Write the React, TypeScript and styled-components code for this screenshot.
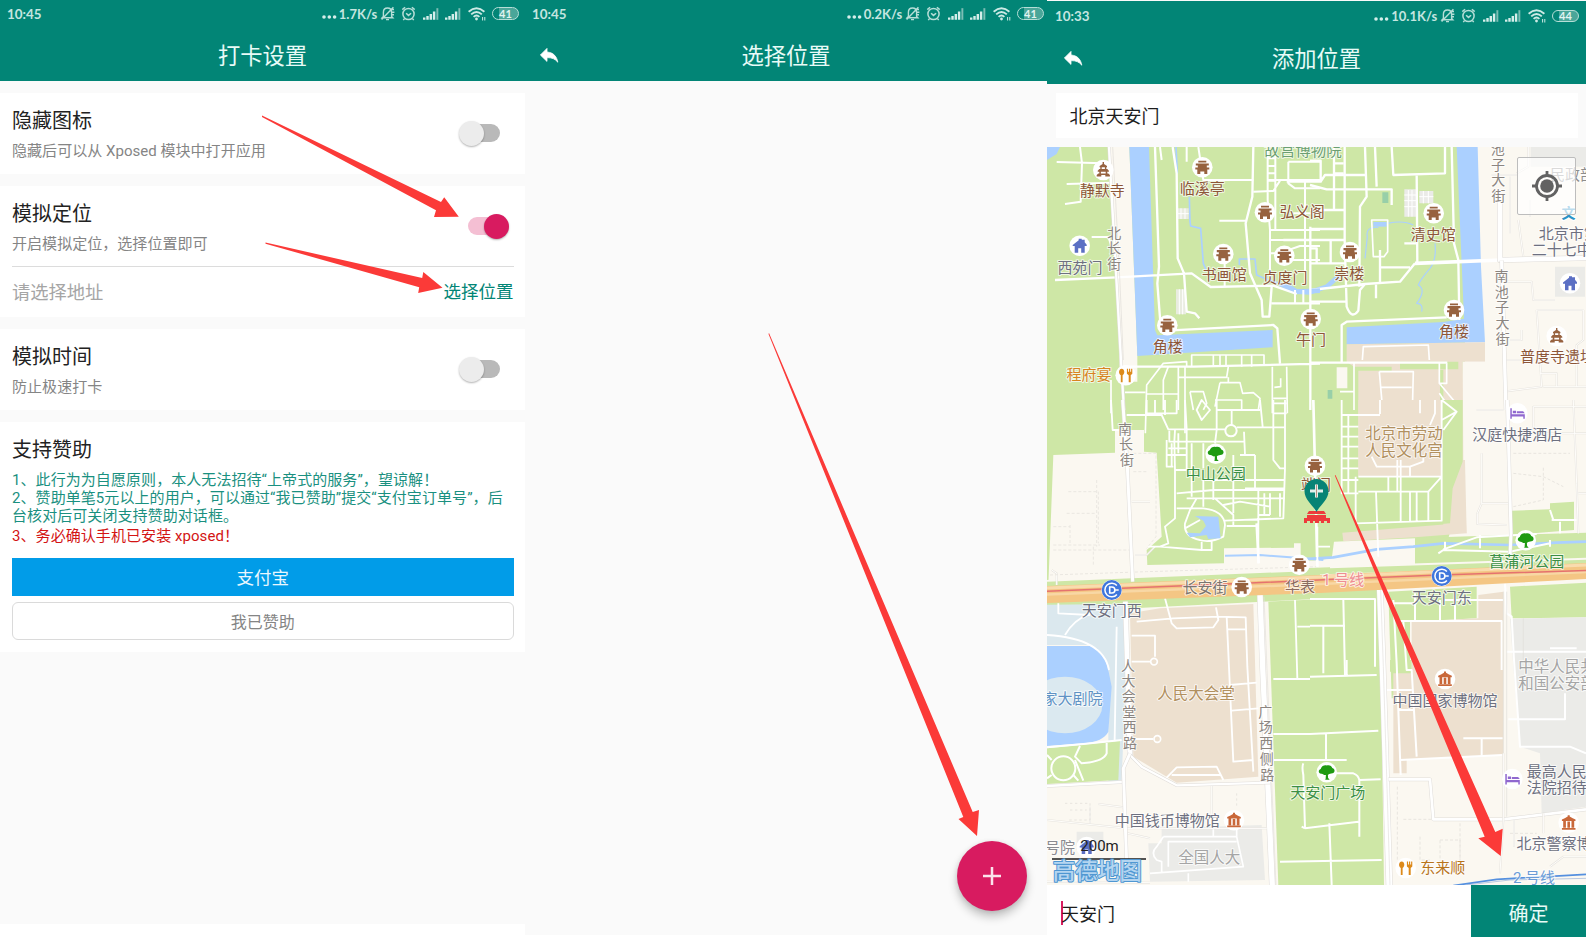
import React from "react";
import styled, { createGlobalStyle } from "styled-components";

const cjk = `Roboto, "Noto Sans CJK SC", sans-serif`;
const teal = "#028576";
const pink = "#d81b60";

const GlobalStyle = createGlobalStyle`
  *, *::before, *::after { box-sizing: border-box; }
  body { margin: 0; background: #fff; font-family: ${cjk}; }
  button, input { font: inherit; }
`;

const Page = styled.main`
  position: relative;
  display: flex;
  align-items: flex-start;
  width: 1588px;
  height: 942px;
  overflow: hidden;
  background: #fff;
`;

const Screen = styled.section<{ $w: number; $h: number }>`
  position: relative;
  display: flex;
  flex-direction: column;
  flex: none;
  width: ${(p) => p.$w}px;
  height: ${(p) => p.$h}px;
  background: #fafafa;
`;

const Header = styled.header<{ $h: number; $top?: number }>`
  display: flex;
  flex-direction: column;
  flex: none;
  height: ${(p) => p.$h}px;
  margin-top: ${(p) => p.$top ?? 0}px;
  background: ${teal};
  color: #e8fbf7;
`;

const StatusRow = styled.div<{ $h: number; $left: number; $right: number }>`
  display: flex;
  align-items: center;
  height: ${(p) => p.$h}px;
  padding: 0 ${(p) => p.$right}px 0 ${(p) => p.$left}px;
  font: 700 13px/20px Lato, sans-serif;
  color: #c5e6e0;
`;

const Clock = styled.span`
  flex: 1;
  font-size: 13.4px;
`;

const StatusIcons = styled.div`
  display: flex;
  align-items: center;
  gap: 6.4px;
  svg { display: block; flex: none; }
`;

const Speed = styled.span`
  display: flex;
  align-items: center;
  justify-content: flex-end;
  margin-right: -3.5px;
  white-space: nowrap;
`;

const Dots = styled.svg`
  margin-right: 2px;
`;

const Battery = styled.span`
  display: flex;
  align-items: center;
  justify-content: center;
  width: 27px;
  height: 12.5px;
  border: 1.3px solid #b6ded7;
  border-radius: 7px;
  background: linear-gradient(90deg, ${teal} 6px, #4aa699 6px);
  font-size: 11px;
  font-weight: 700;
  line-height: 10px;
  color: #e2f4f1;
`;

const TitleRow = styled.div`
  display: grid;
  grid-template-columns: 50px 1fr 50px;
  align-items: center;
  height: 54px;
`;

const BackButton = styled.button<{ $left: number }>`
  display: flex;
  padding: 1px 0 0 ${(p) => p.$left}px;
  border: 0;
  background: none;
  color: #fff;
`;

const Title = styled.h1`
  grid-column: 2;
  margin: 0;
  padding-top: 3px;
  text-align: center;
  font-size: 22.3px;
  font-weight: 400;
  line-height: 32px;
`;

const CardList = styled.div`
  display: flex;
  flex-direction: column;
  gap: 12.5px;
  padding-top: 12px;
`;

const Card = styled.article<{ $h: number }>`
  height: ${(p) => p.$h}px;
  padding: 13px 11.5px 0 12px;
  background: #fff;
`;

const SettingRow = styled.div`
  display: flex;
  justify-content: space-between;
`;

const CardTitle = styled.h2`
  margin: 0;
  font-size: 20px;
  font-weight: 400;
  line-height: 30px;
  color: #222;
`;

const CardHint = styled.p`
  margin: 3px 0 0;
  font-size: 15.05px;
  line-height: 24px;
  color: #858585;
`;

const SwitchTrack = styled.span<{ $on?: boolean }>`
  display: flex;
  align-items: center;
  justify-content: ${(p) => (p.$on ? "flex-end" : "flex-start")};
  width: 32px;
  height: 18px;
  margin: 18px ${(p) => (p.$on ? 14 : 14)}px 0 0;
  border-radius: 9px;
  background: ${(p) => (p.$on ? "#f4bfd3" : "#b9b9b9")};
  &::after {
    content: "";
    flex: none;
    width: 25px;
    height: 25px;
    margin: 0 -9px;
    border-radius: 50%;
    background: ${(p) => (p.$on ? pink : "#ececec")};
    box-shadow: 0 1px 2px rgba(0, 0, 0, 0.3);
  }
`;

const AddressRow = styled.div`
  display: flex;
  align-items: center;
  justify-content: space-between;
  height: 50px;
  margin-top: 10px;
  padding-bottom: 2px;
  border-top: 1px solid #dcdcdc;
`;

const AddressHint = styled.span`
  font-size: 18.3px;
  color: #a5a5a5;
`;

const AddressLink = styled.span`
  font-size: 17.5px;
  color: ${teal};
`;

const Notice = styled.p<{ $warn?: boolean }>`
  margin: ${(p) => (p.$warn ? "2px" : "5.5px")} 0 0;
  font-size: 15px;
  line-height: 18.2px;
  letter-spacing: 0.07px;
  white-space: nowrap;
  color: ${(p) => (p.$warn ? "#d31414" : "#1a9080")};
`;

const WideButton = styled.button<{ $primary?: boolean }>`
  display: flex;
  align-items: center;
  justify-content: center;
  width: 100%;
  height: 38px;
  margin-top: ${(p) => (p.$primary ? 12.5 : 6)}px;
  padding: 0;
  border: ${(p) => (p.$primary ? "0" : "1px solid #dadada")};
  border-radius: ${(p) => (p.$primary ? 0 : 6)}px;
  background: ${(p) => (p.$primary ? "#019ce8" : "#fff")};
  color: ${(p) => (p.$primary ? "#eaf7fe" : "#858585")};
  font-size: ${(p) => (p.$primary ? 17.5 : 16)}px;
`;

const Fab = styled.button`
  position: absolute;
  right: 20.5px;
  bottom: 24px;
  display: flex;
  align-items: center;
  justify-content: center;
  width: 70px;
  height: 70px;
  padding: 0;
  border: 0;
  border-radius: 50%;
  background: ${pink};
  box-shadow: 0 6px 10px rgba(0, 0, 0, 0.22), 0 1px 5px rgba(0, 0, 0, 0.1);
`;

const SearchBox = styled.div`
  display: flex;
  align-items: center;
  flex: none;
  height: 45px;
  margin: 9px 8px 9px 9px;
  padding: 0 0 2px 13.5px;
  background: #fff;
  font-size: 18px;
  color: #1d1d1d;
`;

const MapArea = styled.div`
  position: relative;
  flex: none;
  height: 738px;
`;

const MapSvg = styled.svg`
  display: block;
  width: 539px;
  height: 738px;
`;

const MapText = styled.text<{ $size: number; $weight: number; $halo: string; $stroke?: number }>`
  font-family: ${cjk};
  font-size: ${(p) => p.$size}px;
  font-weight: ${(p) => p.$weight};
  paint-order: stroke;
  stroke: ${(p) => p.$halo};
  stroke-width: ${(p) => p.$stroke ?? 2}px;
  stroke-linejoin: round;
`;

const LocateButton = styled.button`
  position: absolute;
  top: 10px;
  right: 10px;
  display: flex;
  align-items: center;
  justify-content: center;
  width: 59px;
  height: 58px;
  padding: 0;
  border: 1px solid #bdbdbd;
  border-radius: 2px;
  background: rgba(255, 255, 255, 0.68);
`;

const Footer = styled.footer`
  display: flex;
  align-items: stretch;
  height: 52px;
  background: #fff;
`;

const FooterField = styled.div`
  display: flex;
  align-items: center;
  flex: 1;
  padding: 3px 0 0 14px;
  font-size: 18px;
  color: #1d1d1d;
  &::before {
    content: "";
    width: 2px;
    height: 24px;
    margin-right: -2px;
    background: ${pink};
  }
`;

const ConfirmButton = styled.button`
  width: 115px;
  padding: 2px 0 0;
  border: 0;
  background: ${teal};
  color: #e8fbf7;
  font-size: 20px;
`;

const ArrowLayer = styled.svg`
  position: absolute;
  inset: 0;
  pointer-events: none;
`;

const BellOff = () => (
  <svg width="15" height="15" viewBox="0 0 15 15" fill="none" stroke="#b6ded7" strokeWidth="1.4">
    <path d="M3.4 10.6V6.2C3.4 3.6 5.2 2 7.5 2s4.1 1.6 4.1 4.2v4.4l1.2 1.2H2.2zM6 13.6h3M1.6 13.4L13.4 1.2M11 3.5h3M12 6.2h2.4M12 8.8h2" />
  </svg>
);

const Alarm = () => (
  <svg width="15" height="15" viewBox="0 0 14 15" fill="none" stroke="#b6ded7" strokeWidth="1.5">
    <circle cx="7" cy="8" r="5.6" />
    <path d="M.8 3.6L3.6 1.2M13.2 3.6L10.4 1.2M4.6 7.2L7 9.4l2.6-2.2M3 12.6l-1.2 1.5M11 12.6l1.2 1.5" />
  </svg>
);

const Signal = () => (
  <svg width="16" height="12" viewBox="0 0 16.5 12">
    <path d="M0 9.5h2.5V12H0zM3.4 8h2.5v4H3.400zM6.800 6h2.500v6H6.800zM10.200 3.400h2.500V12h-2.500z" fill="#d5eeea" />
    <path d="M13.800 0h2v12h-2z" fill="#7cbdb4" />
  </svg>
);

const Wifi = () => (
  <svg width="18" height="14" viewBox="0 0 18 14" fill="none" stroke="#cdeae5" strokeWidth="1.9">
    <path d="M.6 4.700Q8.500-2 16.400 4.700M3.200 7.400Q8.500 2.600 13.800 7.400M5.600 9.900Q8.500 7.300 11.400 9.900" />
    <circle cx="8.5" cy="12" r="1.4" fill="#cdeae5" stroke="none" />
    <path d="M14.600 10v3.500M16.800 10v3.500" strokeWidth="1" />
  </svg>
);

interface StatusProps {
  time: string;
  speed: string;
  level: string;
  h: number;
  left: number;
  right: number;
}

const StatusBar = ({ time, speed, level, h, left, right }: StatusProps) => (
  <StatusRow $h={h} $left={left} $right={right}>
    <Clock>{time}</Clock>
    <StatusIcons>
      <Speed>
        <Dots width="15" height="14" viewBox="0 0 15 14" fill="#d5eeea">
          <circle cx="2" cy="10" r="1.8" />
          <circle cx="7.3" cy="10" r="1.8" />
          <circle cx="12.6" cy="10" r="1.8" />
        </Dots>
        {speed}
      </Speed>
      <BellOff />
      <Alarm />
      <Signal />
      <Signal />
      <Wifi />
      <Battery>{level}</Battery>
    </StatusIcons>
  </StatusRow>
);

const Back = ({ left }: { left: number }) => (
  <BackButton $left={left} aria-label="back">
    <svg width="24" height="24" viewBox="0 0 24 24" fill="currentColor" stroke="currentColor" strokeWidth="0.8" strokeLinejoin="round">
      <path d="M10 9V5.4L3.4 12l6.6 6.4v-3.800c5 0 8.200 1.400 10.800 4.600C19.800 14 17 9.600 10 9z" />
    </svg>
  </BackButton>
);

const brown = "#8d5638";
const slate = "#6d7080";
const road = "#8b8580";
const leaf = "#3b8f45";
const tan = "#b1905f";
const faint = "#a5a5a5";

type Kind = "gate" | "temple" | "house" | "food" | "tree" | "metro" | "bed" | "museum";

const pins: [Kind, number, number][] = [
  ["temple", 1103.3, 170], ["gate", 1202.3, 167.3], ["gate", 1265, 212.3], ["house", 1079.7, 245.7],
  ["gate", 1223.3, 254], ["gate", 1284.3, 255.7], ["gate", 1167.3, 325.3], ["food", 1125.7, 375.3],
  ["gate", 1310.7, 319], ["gate", 1433.7, 213.3], ["gate", 1350, 252], ["gate", 1454, 310],
  ["house", 1570, 283.3], ["temple", 1556.7, 336], ["tree", 1215.7, 453.7], ["gate", 1315, 465.7],
  ["metro", 1111.7, 590], ["gate", 1241.7, 587], ["gate", 1299.3, 564.7], ["bed", 1517.3, 413.3],
  ["metro", 1441.7, 576], ["tree", 1525.7, 540.3], ["museum", 1234, 820.3], ["tree", 1326.7, 772.3],
  ["museum", 1445, 679], ["bed", 1512.3, 779], ["museum", 1568.7, 822.7], ["food", 1405.7, 868],
  ["house", 1086.7, 847],
];

type Anchor = "start" | "middle" | "end";
const labels: [string, number, number, string, number?, Anchor?][] = [
  ["故宫博物院", 1303, 150.5, "#6b9f72", 15.5],
  ["静默寺", 1102.3, 190.7, brown], ["临溪亭", 1202.3, 189, brown], ["弘义阁", 1302.3, 212.3, brown],
  ["西苑门", 1080, 267.7, slate], ["书画馆", 1224.3, 275.3, brown], ["贞度门", 1285, 277.7, brown],
  ["角楼", 1167.7, 346.7, brown], ["程府宴", 1089, 375.3, "#d8841f"], ["午门", 1311, 340, brown],
  ["清史馆", 1433.3, 235, brown], ["崇楼", 1349.3, 274, brown], ["角楼", 1454, 332, brown],
  ["民政部", 1550, 175, "#8d8d8d", 15, "start"],
  ["北京市第", 1538.7, 234.3, slate, 15, "start"], ["二十七中", 1531.7, 250, slate, 15, "start"],
  ["普度寺遗址", 1520, 357.3, brown, 15, "start"],
  ["中山公园", 1215.7, 474.3, leaf], ["端门", 1316, 485.5, brown],
  ["天安门西", 1111.7, 611.3, slate], ["长安街", 1205, 587.7, "#7b756f"], ["华表", 1300, 587.3, "#8b6b60"],
  ["北京市劳动", 1404, 434, tan, 15.5], ["人民文化宫", 1404, 450.7, tan, 15.5],
  ["汉庭快捷酒店", 1517.3, 435, slate], ["天安门东", 1441.7, 598, slate],
  ["1 号线", 1343.3, 579.7, "#ef8d92", 15], ["菖蒲河公园", 1526.7, 562.3, leaf],
  ["中华人民共", 1518.2, 667, faint, 15.5, "start"], ["和国公安部", 1518.2, 684, faint, 15.5, "start"],
  ["家大剧院", 1102.5, 699, "#5f92c4", 15, "end"], ["人民大会堂", 1196, 694.3, tan, 15.5],
  ["中国钱币博物馆", 1167.3, 821.3, slate], ["号院", 1075, 848.3, "#8a8a90", 15, "end"],
  ["全国人大", 1209.3, 858.3, faint, 15.5], ["天安门广场", 1327.7, 793.5, leaf],
  ["中国国家博物馆", 1445, 700.7, slate], ["最高人民", 1526.7, 771.7, slate, 15, "start"],
  ["法院招待", 1526.7, 787.7, slate, 15, "start"], ["北京警察博", 1516.5, 844.3, slate, 15, "start"],
  ["东来顺", 1442.7, 868, "#b8741b"], ["2 号线", 1534, 877.7, "#6a9bd6", 15],
];

const streets: [string, number, number, number, number][] = [
  ["北长街", 1114.3, 233.3, 15.4, 0], ["池子大街", 1497.7, 149.5, 15.7, 0.3],
  ["南池子大街", 1501.5, 276.7, 15.6, 0.3], ["南长街", 1125, 429.3, 15.6, 1],
  ["人大会堂西路", 1128, 666, 15.4, 0.4], ["广场西侧路", 1265.3, 712, 15.8, 0.5],
];

const Glyph = ({ kind }: { kind: Kind }) => {
  switch (kind) {
    case "gate":
      return <path fill="#97623f" d="M-4-6.500h8v1.800h-8zM-6.500-3.900h13v2.200h-13zM-4.500-1.700h9v2h-9zM-7 .3H7v2H-7zM-5 2.300H5v4.500H2V4.300H-2v2.500h-3z" />;
    case "temple":
      return <path fill="#97623f" d="M-.7-8h1.400v2l3 2v1.200h-7.400V-4l3-2zM-3-2.800h1.400v2H-3zM1.600-2.800H3v2H1.600zM-5.600.8L-4-1h8l1.600 1.800v.9h-11.200zM-4 1.700h1.600v2H-4zM2.400 1.700H4v2H2.400zM-6.600 5L-5 3.400H5L6.600 5v1.500h-4.600V5h-4v1.500h-4.600z" />;
    case "house":
      return <path fill="#5b6fc4" d="M-7-.8L-1-5.500V-7h3v1h3v2.500L7-1v1.400H5V7H1.500V2.500h-3V7H-5V.4h-2z" />;
    case "food":
      return <path fill="#dd8a1b" d="M-4-6.500c3 0 3.600 5 .9 6.500V7h-1.800V0C-7.600-1.500-7-6.500-4-6.500zM1.200-6.500h1.200v3h.9v-3h1.200v3h.9v-3H6.600v5L5 0v7H3V0L1.200-1.500z" />;
    case "tree":
      return <path fill="#1f9a12" d="M-1.100 7l.3-4.400C-3 3.200-3.600 1-5.500 1.400-8.600 1-8.600-2.600-6-3.400-5-7-1.500-7.400 0-6.800c3-.8 5 .6 5.600 2.600C8.600-3.400 8.600.6 5.800 1 4 1.600 3 1 1.200 2.600l.2 3L3 7.400h-5z" />;
    case "bed":
      return <path fill="#9068cf" d="M-7-5h1.500v6h13v4.500H6V3.300H-5.500v2.200H-7zM-4.500-2.600h3.200V0h-3.200zM-.5-2h6.300L7.500 0h-8z" />;
    case "museum":
      return <path fill="#c9683a" d="M-1-7.500h2v1.200L4-4.500 6.800-3.200V-1.800H-6.800v-1.400L-4-4.500-1-6.300zM-5.500-1.800H-2.800V5h-2.700zM-1.300-1.200h2.600V5h-2.600zM2.800-1.800h2.700V5H2.800zM-6.800 5.300h13.600V7h-13.600z" />;
    case "metro":
      return (
        <g fill="none" stroke="#fff">
          <circle r="10" fill="#3f76dc" stroke="none" />
          <path d="M5.200-4.400A6.800 6.800 0 1 0 5.200 4.400" strokeWidth="1.5" />
          <path d="M-2-3v6h2.200a3 3 0 0 0 0-6zM3.200 0H7" strokeWidth="1.6" />
        </g>
      );
  }
};

const green = "#cee7a6";
const water = "#abd0ff";
const cream = "#fbf8f1";
const beige = "#ede0cf";
const gray = "#ebebe8";

interface TileProps {
  x: number;
  y: number;
  children: React.ReactNode;
}
/* Each tile is drawn on a grid three times finer than the map. */
const Tile = ({ x, y, children }: TileProps) => (
  <g transform={`translate(${x} ${y}) scale(.33333)`} fill="none" strokeLinejoin="round">
    {children}
  </g>
);

const Roads = ({ d, w = 6 }: { d: string; w?: number }) => <path d={d} stroke="#fff" strokeWidth={w} />;
const Cased = ({ d, w = 12 }: { d: string; w?: number }) => (
  <>
    <path d={d} stroke="#dfdcd8" strokeWidth={w + 3} />
    <path d={d} stroke="#fff" strokeWidth={w} />
  </>
);
const Lanes = ({ d }: { d: string }) => (
  <>
    <path d={d} stroke="#e6e3de" strokeWidth="6" />
    <path d={d} stroke="#fffefb" strokeWidth="3" />
  </>
);

const MapBase = () => (
  <>
    <path d="M1047 147h539v738h-539z" fill={cream} />
    <path d="M1047 147H1459L1465 270V360L1463 480 1448 540 1320 560 1047 580z" fill={green} />

    <Tile x={1310} y={140}>
      <path fill={water} d="M440 21H503L513 380 525 607 110 613V562L400 546 462 536 455 370z" />
      <path fill={beige} d="M110 613L525 607V665H458L470 1180 400 1160V690H390V1010H145V690L110 665z" />
      <path fill={cream} d="M526 607L528 665H458L460 960 470 1180 828 1160V600zM80 682H112V745H80z" />
      <path fill={green} d="M135 680H245V692H135zM270 665H445V688H270z" />
      <path fill={gray} d="M662 21H828V80H662zM735 380H825V470H735zM283 148H318V230H283zM328 153H370V190H328z" />
      <path fill="#98cfa8" d="M217 157h18v32h-18zM53 750h14v26h-14z" />
      <path fill={water} d="M190 246h40v14h-40z" />
      <path stroke={water} strokeWidth="3.5" d="M205 262Q165 260 172 290L165 355M233 250Q280 240 310 255M375 310Q380 360 360 385 330 420 325 435 350 450 320 490 340 490 335 515" />
      <path stroke={water} strokeWidth="14" d="M-90 432L-40 455 0 457 50 440 90 405" />
      <Roads w={7} d="M0 668H412M0 62H32V125H-70M0 135L50 148H245V195M72 21V210M72 70H100M72 100H100M104 21V300L110 500Q125 540 145 512L150 450 165 432M32 125L45 105H165M165 21L170 170 150 200 148 440M195 21L200 140M245 21L250 105 405 100V21M425 21L432 310 445 360 448 540M320 105L322 370M315 370L270 425 165 432 0 450M213 382H300M210 330V425M95 668V555L110 545 410 532M0 210H105M0 267H105M-80 300H105M0 325H20V370M62 300V370M0 370H105M198 430V475M0 485H110M283 310H322" />
      <Roads w={5} d="M185 240H233V335L222 350H190zM157 660L160 620 355 615 358 660M208 695H310L302 1010M208 695L218 810 212 822M212 742H305M132 668V810M90 755H130M388 668V730H410V670M388 730L455 810M388 760L440 835" />
      <Roads w={11} d="M315 370L575 360" />
      <Lanes d="M545 105H620M655 21V80L620 100M580 425L665 425 670 480H735M680 510H820M680 510L695 740 580 755M700 740H828M588 660H680M820 510V600L800 615V740M600 600L635 600V570M740 740V700H690M600 110V280M625 240L640 350M660 180V230" />
      <Cased w={14} d="M570 165V360L828 354" />
      <Cased w={10} d="M575 362L588 810" />
      <g stroke="#fff" strokeWidth="3">
        <path d="M283 165h35M283 182h35M283 200h35M295 150v80M306 150v80M328 170h42M340 153v37M355 153v37" />
      </g>
    </Tile>

    <Tile x={1040} y={140}>
      <path fill={cream} d="M208 21H268L292 648V725H240L236 600z" />
      <path fill={water} d="M268 21H327L345 570 352 586 698 570V622L292 648zM21 21H60L50 42 21 60z" />
      <path stroke={water} strokeWidth="5" d="M408 21L412 100M448 170L450 245 452 258 482 265 490 370 500 395M598 375V357H645L650 405 685 420 720 430" />
      <path stroke={water} strokeWidth="14" d="M735 432L770 455 840 452" />
      <path fill="#e9ece0" d="M412 205h34v32h-34zM408 448h30v75h-30z" />
      <Roads w={6} d="M120 21L126 70 122 185 75 192M50 66L190 70M80 132L215 128M155 291H205L215 320M360 21L365 60M440 21V65M475 21L490 120H640M538 242H618M640 155L700 153 720 122M683 21V180L690 270V420M706 21V270M683 55H706M683 78H706M683 100H706M683 122H706M745 65H840M745 65V130L765 145H840M685 120H840M795 125V430M690 270H840M690 300H760M740 332L780 318H840M730 360H840M690 340H730M760 220H840M765 450V490M790 450V490M554 370V440" />
      <Roads w={7} d="M345 21L357 380 352 430 362 560M380 572L700 555 712 565 720 670M398 21L410 100 413 355 432 400 440 515 465 520 478 535M640 21L637 170 617 250 630 400 665 480 668 530H688L695 440M695 490H840M811 260V810M45 420L230 412 455 400 512 441 700 437 770 462M250 680H460L840 671" />
      <Roads w={5} d="M455 680V645H672V675M520 645V680M540 645V680M558 645V680M605 645V680M635 645V680M440 680V665L370 670 320 735 316 880M385 680L370 720V810M415 680V810M435 680V880M320 762H415M415 712H560L565 680M565 712V728M540 728L525 800M540 728H600L608 760 640 758 660 775 655 810M525 780H605V810M450 755H490L500 790 490 810M450 755L460 810M697 680V820M740 680L742 820M700 775H740M703 742L722 740V715M255 757H316M213 720V820" />
      <Cased w={7} d="M207 21L217 200 230 430 243 660 252 810" />
      <path stroke="#dfdcd8" strokeWidth="2" d="M218 21L228 200 240 430 250 660" />
      <path stroke="#fff" strokeWidth="3" d="M412 221h34M423 205v32M435 205v32M418 448v75M428 448v75" />
    </Tile>

    <Tile x={1040} y={400}>
      <path fill={cream} d="M40 165L225 158V90H312V155L350 158 365 410 320 450 322 495 552 490V445L762 443V430H782V480L850 485V520L25 555z" />
      <path fill={green} d="M21 545L840 512V530L21 562z" />
      <Lanes d="M275 305H330M285 465H320L345 440M50 555V520L35 510" />
      <g stroke="#eae7e1" strokeWidth="3" strokeDasharray="9 6">
        <path d="M85 275H175V430M80 340H170M40 435H180M90 375V430M40 380H90M170 240V440M280 160H348V410L320 445M280 215H320M160 440V500M40 450H270M30 525L320 515 840 500" />
      </g>
      <Roads w={5.5} d="M213 0L218 90H240M260 45H365L385 88H440L435 0M320 0V40H410V0M345 0V40M375 0V45M388 92V125H615M380 120V200H400M380 165H440M395 130V200M385 145H440M405 90L403 125 405 210H440M405 210V355L375 380 385 430 360 440 485 450H515V422M485 425V450M575 30V75M530 0V90L525 130M530 30H660M660 0L668 80M590 82H735M440 88H555M612 95L615 165M700 0V180L720 205H735L730 355 555 362M735 0V205M700 10H740M700 40H740M415 100V160M440 88V210M410 280L520 270H730M440 295H735M410 325H490Q552 332 555 375L550 410Q510 430 480 420 430 410 435 370L450 330 470 295M435 385L480 360M455 130V290M490 240V320M490 130V205M520 240V300M525 295L580 345V375M580 165V340M645 165V270M655 270V490M690 280V345M673 280V345M655 345H690M720 280V350M600 165H645M495 240H735M615 265H735M560 378H655M550 315L600 305 690 320M470 30L485 0 510 30 485 60zM360 440H325" />
      <circle cx="573" cy="92" r="17" fill={green} stroke="#fff" strokeWidth="6" />
      <path fill={water} d="M465 348L535 350 542 415 505 417 500 405 450 412 440 398 480 400 498 378 490 362z" />
      <path stroke={water} strokeWidth="6" d="M555 467L660 465 750 472 850 480" />
      <Cased w={9} d="M248 0L262 200 278 545" />
      <Roads w={8} d="M820 0L832 500M650 370L656 490" />
      <path fill={green} d="M21 600L840 566V596L280 625 21 615z" />
      <path fill="#dbe8ee" d="M21 614L255 612 258 810 245 1140 205 1150V810L150 735H21z" />
      <path fill={water} d="M21 738H150Q190 745 205 810L215 860 205 995Q190 1025 130 1030L21 1038z" />
      <path fill={beige} d="M270 640L360 625 640 612 655 1130 410 1148 280 1070z" />
      <path fill={green} d="M685 605L840 598V1455H715z" />
      <Roads w={5.5} d="M290 665L400 655 535 650 617 652 622 800 640 1115M375 595L395 670 410 685 520 682 535 660 528 622M560 650L580 1085 640 1080M560 688H617M275 707H345V770M275 785H330M765 600L772 835M772 680H840M570 855L650 848M575 932L655 925M285 1017H340M375 1138L410 1102 530 1100 550 1140M395 1125H540M21 705Q190 715 207 810M75 705Q100 660 150 640M230 680L222 1130M55 610V640L150 645" />
      <circle cx="342" cy="785" r="10" fill={beige} stroke="#fff" strokeWidth="5" />
      <circle cx="352" cy="1017" r="10" fill={beige} stroke="#fff" strokeWidth="5" />
      <Cased w={14} d="M256 605L262 800 270 1070" />
      <Cased w={16} d="M660 580L668 800 697 1460" />
      <path stroke="#e3e0dc" strokeWidth="2" d="M672 590L708 1460" />
    </Tile>

    <Tile x={1310} y={400}>
      <path fill={beige} d="M145 0H395V228H145zM458 180L465 180 470 400 315 412 100 424 97 398 420 372 430 260z" />
      <path fill={green} d="M145 228H400V370L145 375zM395 0H458V185L428 265 420 370 395 372z" />
      <path fill={cream} d="M72 425L315 415 318 480 62 500z" />
      <path fill={green} d="M605 332L720 328V310L792 305V390L605 405zM315 414L828 398V484L315 494z" />
      <path fill={green} d="M-20 505L828 472V495L-20 525z" />
      <path stroke={cream} strokeWidth="6" d="M60 502L828 476" />
      <path stroke={water} strokeWidth="8" d="M-30 478L70 472 200 448 310 440 400 430 600 435 740 428 828 425" />
      <Roads w={5.5} d="M95 0V280H145M115 42V280M95 45H210M95 80H145M95 110H145M95 140H145M95 175H145M95 205H145M95 240H145M210 42V0M145 230H395M145 275H355L395 230M137 230V370L395 362V0M198 275L205 470M235 230V275M262 180V275M272 180V368M300 275V365M320 275V365M355 275V362M395 0L440 35 400 90M375 0V40L360 75M330 0V40M440 35L395 60M22 380V500M25 440H60M185 170L200 200H300L340 185V165M300 200V230" />
      <Roads w={6} d="M400 448L500 412 680 402M510 405V445M385 460L400 450 600 455 720 430M405 425V450M750 365V400M725 360H800M720 330L730 360M720 420V440" />
      <Lanes d="M500 30H580M670 100V20H828M790 0L800 250 805 400M515 160V310H595M515 310L502 340V372L590 375M670 100H828M805 280H828" />
      <path stroke="#e8e5df" strokeWidth="3" strokeDasharray="9 6" d="M610 160H780M610 220L700 230 760 260M610 320L700 300V200" />
      <Cased w={9} d="M592 0L603 400 600 470" />
      <path fill={green} d="M0 570L210 555V600L222 1455H0zM235 575L500 560V655L300 665V810H325V895H245z" />
      <path fill={beige} d="M505 585L580 575V1065L290 1080V1120H250V820H305V665L505 655z" />
      <path fill={green} d="M240 780H305V815H240zM600 560L828 548V652L605 655z" />
      <path fill={gray} d="M600 656L828 652V1220L695 1240 690 1060 630 1040 610 800z" />
      <Roads w={6} d="M0 597H195V800M100 600L105 825M0 677H105M40 677V820M250 600L260 790 272 1125M280 665L290 810 305 810 320 1070M240 610H320M315 580V660M390 600V660M435 580V660M270 663H575V810M400 600H580M590 755H828M720 745H800M585 550L590 640 605 650 612 780M262 930H310M270 1080L578 1065M460 1015H578M515 1015V1065M215 870H305M595 958H765V880M612 780L630 1040H780L828 1060" />
      <Roads w={6} d="M0 830L200 825M110 780V828M0 1002L205 992M48 1002V1080M-110 1080H110M48 1120H130Q145 1125 148 1140L212 1138M148 1140V1310M-15 1285L145 1265M58 1270L65 1455M-90 1385L215 1380M-110 1002H0M-110 837H0M-25 1280L-15 1285M-20 1090Q-25 1100 -20 1125L-15 1285" />
      <Cased w={18} d="M210 570L218 800 238 1455" />
      <path stroke="#e3e0dc" strokeWidth="2" d="M212 570L220 800 240 1455" />
      <path stroke="#e1ded9" strokeWidth="2" d="M580 575V1250M590 575V1250M640 655V780" />
    </Tile>

    <Tile x={1040} y={660}>
      <ellipse cx="75" cy="135" rx="112" ry="85" fill="#dbe9f0" />
      <path fill={green} d="M21 265L120 255 240 242 235 360 21 372z" />
      <Roads w={6} d="M120 258L105 290 125 310Q190 305 200 280V245M105 300L130 362M35 300L21 285M100 345L115 362M35 345L21 355M21 262L130 252 245 240" />
      <circle cx="70" cy="325" r="36" stroke="#fff" strokeWidth="6" />
      <path fill={gray} d="M365 505L665 495 675 660 330 665 325 550H365zM110 515H190V570H110z" />
      <Roads w={5} d="M370 530H590L610 620 330 640M370 530L350 560Q330 580 350 600L365 605V640M385 620V545H590M590 530V500M520 505V530M445 640V665" />
      <Lanes d="M21 480L260 505H680M175 432L250 442M262 520L330 535M515 375V465M21 665L330 668M150 440V490" />
      <path stroke="#e8e5df" strokeWidth="3" strokeDasharray="7 8" d="M75 430H150V480H80M90 450H140M590 400V440" />
      <Cased w={7} d="M270 285L305 320 410 376 690 368M21 378L248 366" />
      <Cased w={9} d="M270 280L250 325 262 665" />
    </Tile>

    <Tile x={1310} y={660}>
      <Cased w={8} d="M235 358H360L370 478H580L828 448" />
      <Lanes d="M580 280V480L570 640M612 480V560M700 460V520M720 620L760 590H828" />
      <path stroke="#e8e5df" strokeWidth="3" strokeDasharray="9 6" d="M262 380V600M330 530V600H360M390 540H450V620H390zM280 478H365M450 490V600M600 520H680" />
      <path stroke="#b9c9e2" strokeWidth="3" d="M470 675L600 660 828 655" />
      <path stroke="#5590df" strokeWidth="5" d="M430 677L560 658 828 643" />
    </Tile>

    <path d="M1047 586L1320 575 1586 563V579L1320 593 1047 603z" fill="#f4c684" />
    <path d="M1047 588L1320 577 1586 565" fill="none" stroke="#f9dcae" strokeWidth="3" />
    <path d="M1047 594.5L1320 584 1586 572" fill="none" stroke="#f8d7a4" strokeWidth="2.5" />
    <path d="M1047 591.3L1240 583.5 1340 579 1440 575 1586 570.5" fill="none" stroke="#e5726f" strokeWidth="1.5" />
  </>
);

const CityMap = () => (
  <MapSvg viewBox="1047 147 539 738">
    <MapBase />
    {pins.map(([kind, x, y], i) => (
      <g key={i} transform={`translate(${x} ${y})`}>
        <circle r="10.3" fill="#fff" />
        <Glyph kind={kind} />
      </g>
    ))}
    {labels.map(([text, x, y, color, size = 15, anchor = "middle"], i) => (
      <MapText
        key={i}
        x={x}
        y={y - 0.7 + size * 0.37}
        fill={color}
        textAnchor={anchor}
        $size={size}
        $weight={400}
        $halo="rgba(255,255,255,.7)"
      >
        {text}
      </MapText>
    ))}
    {streets.map(([name, x, y, step, drift]) =>
      [...name].map((ch, i) => (
        <MapText
          key={name + i}
          x={x + drift * i}
          y={y + step * i + 4.5}
          fill={road}
          textAnchor="middle"
          $size={14}
          $weight={400}
          $halo="rgba(255,255,255,.7)"
        >
          {ch}
        </MapText>
      ))
    )}
    <MapText x="1568.5" y="217.5" fill="#2c93c6" textAnchor="middle" $size={14} $weight={700} $halo="#fff">
      文
    </MapText>
    <g fill="#ee3b3b">
      <path d="M1309 511h15l2 3h-19zM1307 515h19v3h-19zM1304 518h26v5h-3v-2h-3v2h-3v-2h-2v2h-4v-2h-2v2h-3v-2h-3v2h-3z" />
    </g>
    <path d="M1316.5 512C1313 505 1304.5 500 1304.5 491a12 12 0 0 1 24 0C1328.5 500 1320 505 1316.5 512z" fill="#078375" />
    <path d="M1310 491h13M1316.5 484.5v13" stroke="#e0efec" strokeWidth="3" />
    <path d="M1316.5 484.5v13" stroke="#b98f80" strokeWidth="1" />
    <path d="M1052 859h94" fill="none" stroke="#1b1b1b" strokeWidth="1.3" />
    <MapText x="1099.5" y="850.5" fill="#222" textAnchor="middle" $size={15} $weight={400} $halo="none">
      200m
    </MapText>
    <MapText x="1097.3" y="878.5" fill="#b4d5f0" textAnchor="middle" $size={22.3} $weight={500} $halo="#4f97d2" $stroke={2}>
      高德地图
    </MapText>
  </MapSvg>
);

const arrows = [
  "262,115.5 441,202 444.2,197.3 458.8,216.7 434,217 436,210.3 262,117",
  "265.500,242.500 422.2,278 423.3,272 442.5,287.7 418.2,293 419.2,287.3 265.500,243.700",
  "769,333 972.7,812 979,810 977,836 958.5,819 963.3,817 768.500,334",
  "1335.500,475 1495.3,832 1502.7,828.7 1500.7,856 1478.3,838.3 1484.7,836.7 1334.800,475.500",
];

export default function App() {
  return (
    <>
      <GlobalStyle />
      <Page>
        <Screen $w={525} $h={924}>
          <Header $h={81}>
            <StatusBar time="10:45" speed="1.7K/s" level="41" h={27} left={7} right={6} />
            <TitleRow>
              <Title>打卡设置</Title>
            </TitleRow>
          </Header>
          <CardList>
            <Card $h={80.5}>
              <SettingRow>
                <div>
                  <CardTitle>隐藏图标</CardTitle>
                  <CardHint>隐藏后可以从 Xposed 模块中打开应用</CardHint>
                </div>
                <SwitchTrack />
              </SettingRow>
            </Card>
            <Card $h={130.5}>
              <SettingRow>
                <div>
                  <CardTitle>模拟定位</CardTitle>
                  <CardHint>开启模拟定位，选择位置即可</CardHint>
                </div>
                <SwitchTrack $on />
              </SettingRow>
              <AddressRow>
                <AddressHint>请选择地址</AddressHint>
                <AddressLink>选择位置</AddressLink>
              </AddressRow>
            </Card>
            <Card $h={80.5}>
              <SettingRow>
                <div>
                  <CardTitle>模拟时间</CardTitle>
                  <CardHint>防止极速打卡</CardHint>
                </div>
                <SwitchTrack />
              </SettingRow>
            </Card>
            <Card $h={230}>
              <CardTitle>支持赞助</CardTitle>
              <Notice>
                1、此行为为自愿原则，本人无法招待“上帝式的服务”，望谅解！
                <br />
                2、赞助单笔5元以上的用户，可以通过“我已赞助”提交“支付宝订单号”，后
                <br />
                台核对后可关闭支持赞助对话框。
              </Notice>
              <Notice $warn>3、务必确认手机已安装 xposed！</Notice>
              <WideButton $primary>支付宝</WideButton>
              <WideButton>我已赞助</WideButton>
            </Card>
          </CardList>
        </Screen>

        <Screen $w={522} $h={935}>
          <Header $h={81}>
            <StatusBar time="10:45" speed="0.2K/s" level="41" h={27} left={7} right={3} />
            <TitleRow>
              <Back left={12} />
              <Title>选择位置</Title>
            </TitleRow>
          </Header>
          <Fab aria-label="add">
            <svg width="18" height="18" viewBox="0 0 18 18" stroke="#fbe3ec" strokeWidth="2.5">
              <path d="M9 0v18M0 9h18" />
            </svg>
          </Fab>
        </Screen>

        <Screen $w={539} $h={937}>
          <Header $h={83} $top={1}>
            <StatusBar time="10:33" speed="10.1K/s" level="44" h={30} left={8} right={7} />
            <TitleRow>
              <Back left={14} />
              <Title>添加位置</Title>
            </TitleRow>
          </Header>
          <SearchBox>北京天安门</SearchBox>
          <MapArea>
            <CityMap />
            <LocateButton aria-label="locate">
              <svg width="32" height="32" viewBox="-16 -16 32 32" fill="none" stroke="#626262">
                <circle r="10.5" strokeWidth="2.8" />
                <circle r="6.8" fill="#626262" stroke="none" />
                <path d="M0-15v5M0 10v5M-15 0h5M10 0h5" strokeWidth="2.8" />
              </svg>
            </LocateButton>
          </MapArea>
          <Footer>
            <FooterField>天安门</FooterField>
            <ConfirmButton>确定</ConfirmButton>
          </Footer>
        </Screen>

        <ArrowLayer width="1588" height="942" viewBox="0 0 1588 942" fill="#fb3a38">
          {arrows.map((points) => (
            <polygon key={points} points={points} />
          ))}
        </ArrowLayer>
      </Page>
    </>
  );
}
